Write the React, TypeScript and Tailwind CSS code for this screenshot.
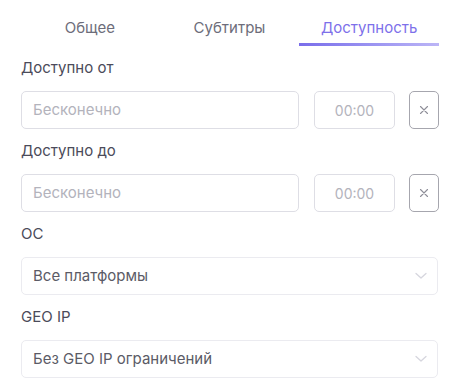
import React from "react";

function Chevron() {
  return (
    <svg width="12" height="8" viewBox="0 0 12 8" fill="none" className="shrink-0">
      <path d="M1 1.5 L6 6 L11 1.5" stroke="#d6d6de" strokeWidth="1.3" strokeLinecap="round" strokeLinejoin="round" />
    </svg>
  );
}

function Cross() {
  return (
    <svg width="10" height="10" viewBox="0 0 10 10" fill="none">
      <path d="M1.5 1.5 L8.5 8.5 M8.5 1.5 L1.5 8.5" stroke="#8e8e98" strokeWidth="1.1" strokeLinecap="round" />
    </svg>
  );
}

function DateRow({ label }: { label: string }) {
  return (
    <div className="flex flex-col">
      <div className="h-5 leading-5 text-[15px] font-normal text-[#4b4b5a] pl-px">{label}</div>
      <div className="mt-[13px] flex items-center">
        <div className="ml-px h-[38px] w-[278px] rounded-[5px] border border-[#dedee5] flex items-center pl-[11px] text-[15px] text-[#b3b3bc]">
          Бесконечно
        </div>
        <div className="ml-[15px] h-[38px] w-[81px] rounded-[5px] border border-[#dedee5] flex items-center justify-center text-[14px] text-[#b3b3bc]">
          00:00
        </div>
        <div className="ml-[14px] h-[38px] w-[30px] rounded-[5px] border border-[#a6a6ae] flex items-center justify-center">
          <Cross />
        </div>
      </div>
    </div>
  );
}

function SelectRow({ label, value }: { label: string; value: string }) {
  return (
    <div className="flex flex-col">
      <div className="h-5 leading-5 text-[15px] font-normal text-[#4b4b5a] pl-px">{label}</div>
      <div className="mt-[13px] ml-px h-[38px] w-[417px] rounded-[5px] border border-[#ebebf0] flex items-center justify-between pl-[11px] pr-[6px] text-[15px] text-[#5b5b66]">
        <span>{value}</span>
        <span className="w-[20px] flex justify-center"><Chevron /></span>
      </div>
    </div>
  );
}

export default function App() {
  return (
    <div className="w-[449px] h-[387px] bg-white pl-[20px] pr-[10px] overflow-hidden" style={{ fontFamily: '"Inter", "Noto Sans", sans-serif' }}>
      <div className="flex h-[46px] w-[419px]">
        <div className="flex-1 flex flex-col items-center justify-end">
          <div className="text-[15px] text-[#6d6d7a] pb-[4px]">Общее</div>
          <div className="h-[3px] w-full" />
        </div>
        <div className="flex-1 flex flex-col items-center justify-end">
          <div className="text-[15px] text-[#6d6d7a] pb-[4px]">Субтитры</div>
          <div className="h-[3px] w-full" />
        </div>
        <div className="flex-1 flex flex-col items-center justify-end">
          <div className="text-[15px] text-[#7d70ea] pb-[4px]">Доступность</div>
          <div className="h-[3px] w-full bg-gradient-to-r from-[#7a6dea] to-[#bcb5f6]" />
        </div>
      </div>
      <div className="mt-[12px] flex flex-col gap-[12px]">
        <DateRow label="Доступно от" />
        <DateRow label="Доступно до" />
        <SelectRow label="ОС" value="Все платформы" />
        <SelectRow label="GEO IP" value="Без GEO IP ограничений" />
      </div>
    </div>
  );
}
